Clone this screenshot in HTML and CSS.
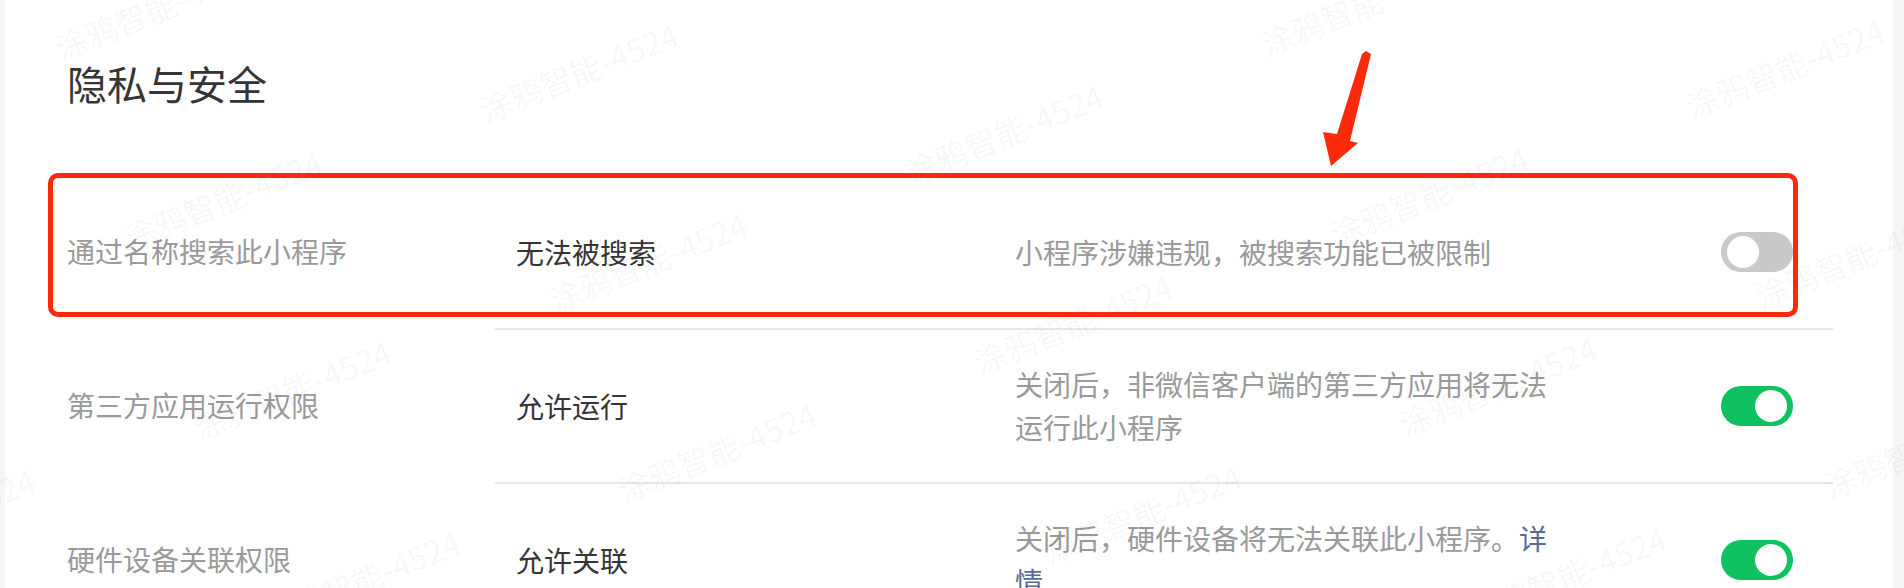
FILE: index.html
```html
<!DOCTYPE html>
<html lang="zh-CN">
<head>
    <meta charset="UTF-8">
    <meta name="viewport" content="width=device-width, initial-scale=1.0">
    <title>隐私与安全</title>
    <link rel="stylesheet" href="styles.css">
</head>
<body>
    <div class="page">
        <div class="side side-left"></div>

        <div class="main">
            <h1 class="title">隐私与安全</h1>

            <div class="settings">
                <div class="row">
                    <div class="row-label">通过名称搜索此小程序</div>
                    <div class="row-body">
                        <div class="row-value">无法被搜索</div>
                        <div class="row-desc">小程序涉嫌违规，被搜索功能已被限制</div>
                        <div class="switch"><span class="knob"></span></div>
                    </div>
                </div>

                <div class="row">
                    <div class="row-label">第三方应用运行权限</div>
                    <div class="row-body">
                        <div class="row-value">允许运行</div>
                        <div class="row-desc">关闭后，非微信客户端的第三方应用将无法运行此小程序</div>
                        <div class="switch on"><span class="knob"></span></div>
                    </div>
                </div>

                <div class="row">
                    <div class="row-label">硬件设备关联权限</div>
                    <div class="row-body">
                        <div class="row-value">允许关联</div>
                        <div class="row-desc">关闭后，硬件设备将无法关联此小程序。<a href="#" class="link">详情</a></div>
                        <div class="switch on"><span class="knob"></span></div>
                    </div>
                </div>
            </div>
        </div>

        <div class="side side-right"></div>

        <!-- annotation on top of the screenshot -->
        <div class="mark-box"></div>
        <svg class="mark-arrow" viewBox="1315 45 65 130" width="65" height="130">
            <polygon points="1362,54 1366,51 1371,54 1350,141 1358,143 1331,166 1323,132 1337,134" fill="#fb2a0c"/>
        </svg>

        <div class="watermarks" id="watermarks"></div>
    </div>

    <script>
        // tiled watermark, same lattice as the original
        const layer = document.getElementById("watermarks");
        for (let i = -4; i <= 5; i++) {
            for (let j = -3; j <= 4; j++) {
                const x = 62 + 425 * i + 69 * j;
                const y = 63 + 62 * i + 190 * j;
                if (x < -260 || x > 1904 || y < 0 || y > 720) continue;
                const mark = document.createElement("span");
                mark.className = "watermark";
                mark.innerText = "涂鸦智能-4524";
                mark.style.left = x + "px";
                mark.style.top = (y - 32) + "px";
                layer.appendChild(mark);
            }
        }
    </script>
</body>
</html>
```

FILE: styles.css
```css
* {
    margin: 0;
    padding: 0;
    box-sizing: border-box;
}

body {
    font-family: "Noto Sans CJK SC", "Noto Sans", sans-serif;
    background: #ffffff;
    color: #353535;
    overflow: hidden;
}

.page {
    position: relative;
    display: flex;
    min-height: 100vh;
}

.side {
    background: #f5f6f8;
}

.side-left {
    width: 5px;
}

.side-right {
    width: 11px;
}

.main {
    flex: 1;
    padding: 55px 60px 0 62px;
    background: #ffffff;
}

.title {
    font-size: 40px;
    line-height: 56px;
    font-weight: normal;
    color: #353535;
}

.settings {
    margin-top: 63px;
}

.row {
    display: flex;
}

.row-label {
    width: 428px;
    display: flex;
    align-items: center;
    font-size: 28px;
    color: #9a9a9a;
}

.row-body {
    flex: 1;
    display: flex;
    align-items: center;
    min-height: 154px;
    padding: 0 40px 0 21px;
    border-top: 2px solid #e6e6eb;
}

.row:first-child .row-body {
    border-top-color: transparent;
}

.row-value {
    width: 499px;
    font-size: 28px;
    line-height: 43px;
    color: #353535;
}

.row-desc {
    width: 545px;
    font-size: 28px;
    line-height: 43px;
    color: #9a9a9a;
}

.link {
    color: #576b95;
    text-decoration: none;
}

.switch {
    margin-left: auto;
    width: 72px;
    height: 40px;
    border-radius: 20px;
    background: #c9c9c9;
    display: flex;
    align-items: center;
    padding: 0 6px;
}

.switch .knob {
    width: 32px;
    height: 32px;
    border-radius: 50%;
    background: #ffffff;
}

.switch.on {
    background: #0fc15f;
    justify-content: flex-end;
}

.mark-box {
    position: absolute;
    left: 48px;
    top: 173px;
    width: 1750px;
    height: 144px;
    border: 5px solid #fb2a0c;
    border-radius: 10px;
}

.mark-arrow {
    position: absolute;
    left: 1315px;
    top: 45px;
}

.watermarks {
    position: absolute;
    inset: 0;
    overflow: hidden;
    pointer-events: none;
}

.watermark {
    position: absolute;
    font-size: 32px;
    line-height: 32px;
    white-space: nowrap;
    color: rgba(0, 0, 0, 0.04);
    transform-origin: 0 100%;
    transform: rotate(-22deg);
}
```
